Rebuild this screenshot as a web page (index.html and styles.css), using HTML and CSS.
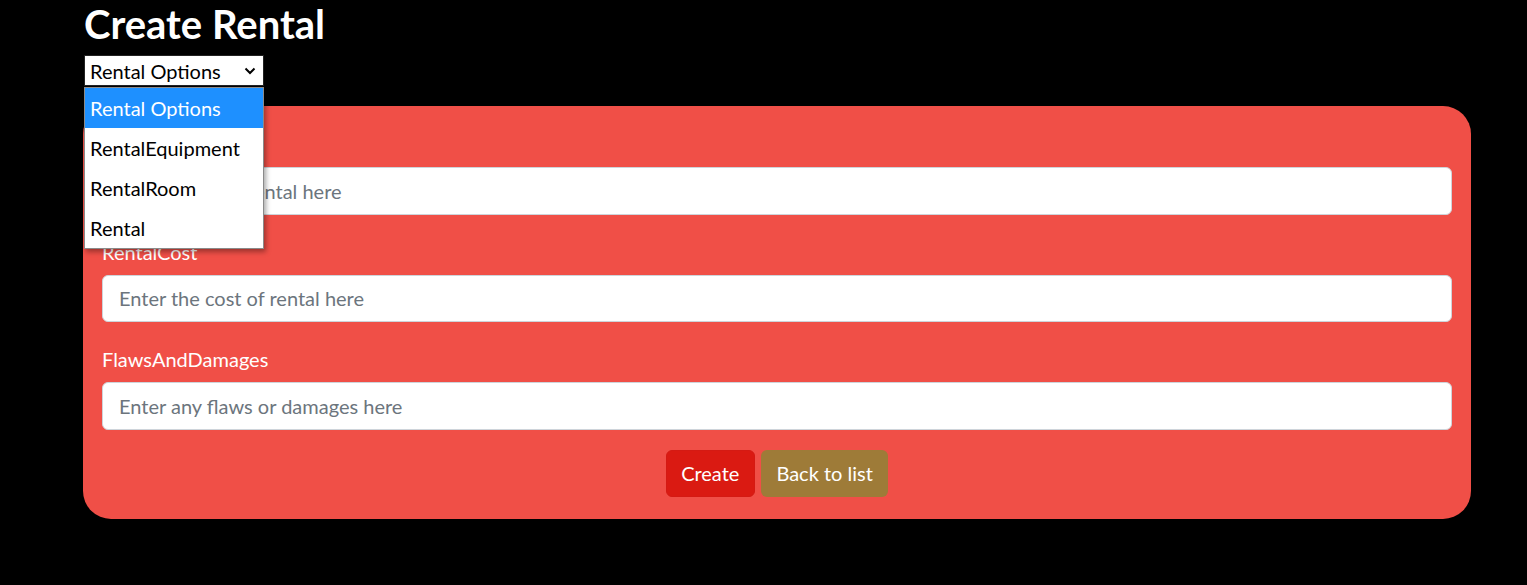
FILE: index.html
```html
<!DOCTYPE html>
<html lang="en">
<head>
<meta charset="utf-8">
<title>Create Rental</title>
<link rel="stylesheet" href="styles.css">
</head>
<body>
<main class="page">
  <h1 class="title">Create Rental</h1>
  <div class="select-wrap">
    <div class="select">
      <span class="select-value">Rental Options</span>
      <svg class="chevron" width="12" height="8" viewBox="0 0 12 8"><path d="M1.5 1.5 L6 6 L10.5 1.5" fill="none" stroke="#000" stroke-width="2"/></svg>
    </div>
    <ul class="dropdown">
      <li class="option selected">Rental Options</li>
      <li class="option">RentalEquipment</li>
      <li class="option">RentalRoom</li>
      <li class="option">Rental</li>
    </ul>
  </div>
  <form class="card">
    <div class="group">
      <label class="label">RentalName</label>
      <input class="input" type="text" placeholder="Enter name of rental here">
    </div>
    <div class="group">
      <label class="label">RentalCost</label>
      <input class="input" type="text" placeholder="Enter the cost of rental here">
    </div>
    <div class="group last">
      <label class="label">FlawsAndDamages</label>
      <input class="input" type="text" placeholder="Enter any flaws or damages here">
    </div>
    <div class="actions">
      <button type="button" class="btn btn-create">Create</button>
      <button type="button" class="btn btn-back">Back to list</button>
    </div>
  </form>
</main>
</body>
</html>
```
FILE: styles.css
```css
* { box-sizing: border-box; }
html, body { margin: 0; padding: 0; }
body {
  background: #000;
  font-family: Lato, "Noto Sans", sans-serif;
  color: #fff;
  width: 1527px;
  height: 585px;
  overflow: hidden;
}
.page {
  padding-left: 83px;
  width: 1471px;
}
.title {
  margin: 0 0 7px 1px;
  font-size: 40px;
  line-height: 48px;
  font-weight: 700;
  color: #fff;
}
.select-wrap {
  position: relative;
  width: 180px;
  margin-left: 1px;
}
.select {
  height: 31px;
  width: 180px;
  background: #fff;
  border: 1px solid #222;
  display: flex;
  align-items: center;
  justify-content: space-between;
  padding: 0 7px 0 5px;
  color: #000;
  font-size: 20px;
}
.chevron { display: block; }
.dropdown {
  position: absolute;
  top: 32px;
  left: 0;
  width: 180px;
  margin: 0;
  padding: 0;
  list-style: none;
  background: #fff;
  border: 1px solid #8a8a8a;
  box-shadow: 2px 3px 5px rgba(0,0,0,0.35);
  z-index: 5;
}
.option {
  height: 40px;
  line-height: 41px;
  padding-left: 5px;
  font-size: 20px;
  color: #000;
}
.option.selected {
  background: #1e90ff;
  color: #fff;
}
.card {
  margin-top: 20px;
  width: 1388px;
  background: #f04f47;
  border-radius: 28px;
  padding: 23px 19px 22.5px;
}
.group {
  display: flex;
  flex-direction: column;
  margin-bottom: 22px;
}
.group.last { margin-bottom: 20px; }
.label {
  font-size: 20px;
  line-height: 30px;
  margin-bottom: 8px;
  color: #fff;
}
.input {
  height: 47.5px;
  width: 100%;
  border: 1px solid #ced4da;
  border-radius: 6px;
  padding: 8px 16px;
  font-family: inherit;
  font-size: 20px;
  color: #212529;
  background: #fff;
}
.input::placeholder { color: #6c757d; }
.actions {
  display: flex;
  justify-content: center;
  gap: 6px;
}
.btn {
  height: 47px;
  padding: 0 14.5px;
  border: 1px solid transparent;
  border-radius: 6px;
  font-family: inherit;
  font-size: 20px;
  color: #fff;
}
.btn-create { background: #da1a12; border-color: #d41a13; }
.btn-back { background: #9e7b38; }
```
